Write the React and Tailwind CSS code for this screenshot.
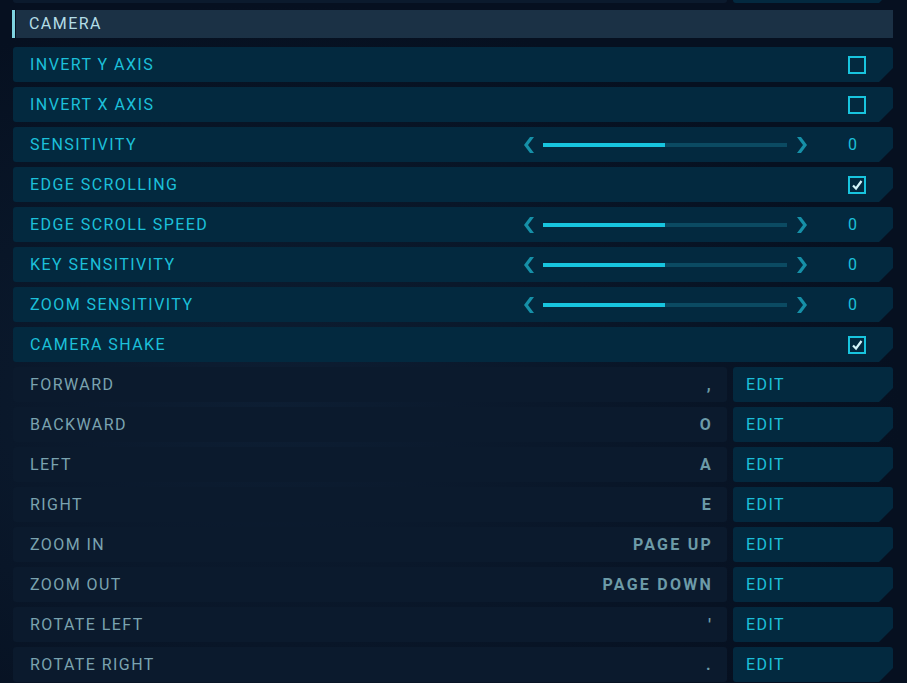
import React from "react";

const chamfer = "[clip-path:polygon(0_0,100%_0,100%_calc(100%-14px),calc(100%-14px)_100%,0_100%)]";

const settings = [
  { label: "INVERT Y AXIS", type: "check", on: false },
  { label: "INVERT X AXIS", type: "check", on: false },
  { label: "SENSITIVITY", type: "slider" },
  { label: "EDGE SCROLLING", type: "check", on: true },
  { label: "EDGE SCROLL SPEED", type: "slider" },
  { label: "KEY SENSITIVITY", type: "slider" },
  { label: "ZOOM SENSITIVITY", type: "slider" },
  { label: "CAMERA SHAKE", type: "check", on: true },
];

const keys = [
  { label: "FORWARD", key: "," },
  { label: "BACKWARD", key: "O" },
  { label: "LEFT", key: "A" },
  { label: "RIGHT", key: "E" },
  { label: "ZOOM IN", key: "PAGE UP" },
  { label: "ZOOM OUT", key: "PAGE DOWN" },
  { label: "ROTATE LEFT", key: "'" },
  { label: "ROTATE RIGHT", key: "." },
];

function Arrow({ dir }) {
  const pts = dir === "left" ? "7,0 11,0 5,8 11,16 7,16 1,8" : "4,0 0,0 6,8 0,16 4,16 10,8";
  return (
    <svg width="11" height="16" viewBox="0 0 11 16" className="shrink-0">
      <polygon points={pts} fill="#1690a8" />
    </svg>
  );
}

function Checkbox({ on }) {
  return (
    <div className="w-[18px] h-[18px] border-2 border-[#18c4de] flex items-center justify-center">
      {on && (
        <svg width="12" height="12" viewBox="0 0 12 12">
          <polyline points="2,6.5 5,9.5 10.5,2" fill="none" stroke="#d4f3f8" strokeWidth="2.2" />
        </svg>
      )}
    </div>
  );
}

function SettingRow({ item }) {
  return (
    <div className={`h-[35px] ml-[1px] flex items-center bg-[#03293f] rounded-[3px] ${chamfer}`}>
      <div className="flex-1 pl-[17px] text-[16px] tracking-[0.09em] text-[#1cc0da]">{item.label}</div>
      {item.type === "slider" && (
        <div className="flex items-center">
          <Arrow dir="left" />
          <div className="ml-[9px] w-[244px] h-[4px] bg-[#0b4a62] flex">
            <div className="w-[122px] h-full bg-[#17c5df]" />
          </div>
          <div className="ml-[10px]">
            <Arrow dir="right" />
          </div>
        </div>
      )}
      <div className={`w-[45px] pr-[17px] flex ${item.type === "slider" ? "ml-[40px]" : ""}`}>
        {item.type === "slider" ? (
          <span className="text-[16px] text-[#1cc0da]">0</span>
        ) : (
          <Checkbox on={item.on} />
        )}
      </div>
    </div>
  );
}

function KeyRow({ item, edit = true }) {
  return (
    <div className="h-[35px] ml-[1px] flex gap-[6px]">
      <div className="flex-1 flex items-center bg-[#0b1a2d] rounded-[3px] pl-[17px] pr-[14px]">
        <span className="flex-1 text-[16px] tracking-[0.09em] text-[#7aa3b0]">{item.label}</span>
        <span className="text-[16px] font-bold tracking-[0.14em] text-[#6c9ba8]">{item.key}</span>
      </div>
      <div className={`w-[160px] flex items-center bg-[#03293f] rounded-[3px] pl-[13px] ${chamfer}`}>
        {edit && <span className="text-[16px] tracking-[0.09em] text-[#1cc0da]">EDIT</span>}
      </div>
    </div>
  );
}

export default function App() {
  return (
    <div
      className="w-[907px] h-[683px] overflow-hidden bg-[#061020] bg-[radial-gradient(ellipse_at_30%_60%,#0d1e33_0%,#061020_70%)]"
      style={{ fontFamily: "Roboto, 'Noto Sans', sans-serif" }}
    >
      <div className="pl-[12px] pr-[14px] flex flex-col">
        <div className="h-[3px] overflow-hidden">
          <div className="-mt-[32px]">
            <KeyRow item={{ label: "", key: "" }} edit={false} />
          </div>
        </div>
        <div className="mt-[7px] h-[28px] flex gap-[1px]">
          <div className="w-[3px] bg-[#7fd3e0]" />
          <div className="flex-1 bg-[#1b3145] flex items-center pl-[13px] text-[16px] tracking-[0.09em] text-[#b3dde6]">
            CAMERA
          </div>
        </div>
        <div className="mt-[9px] flex flex-col gap-[5px]">
          {settings.map((s) => (
            <SettingRow key={s.label} item={s} />
          ))}
          {keys.map((k) => (
            <KeyRow key={k.label} item={k} />
          ))}
        </div>
      </div>
    </div>
  );
}
